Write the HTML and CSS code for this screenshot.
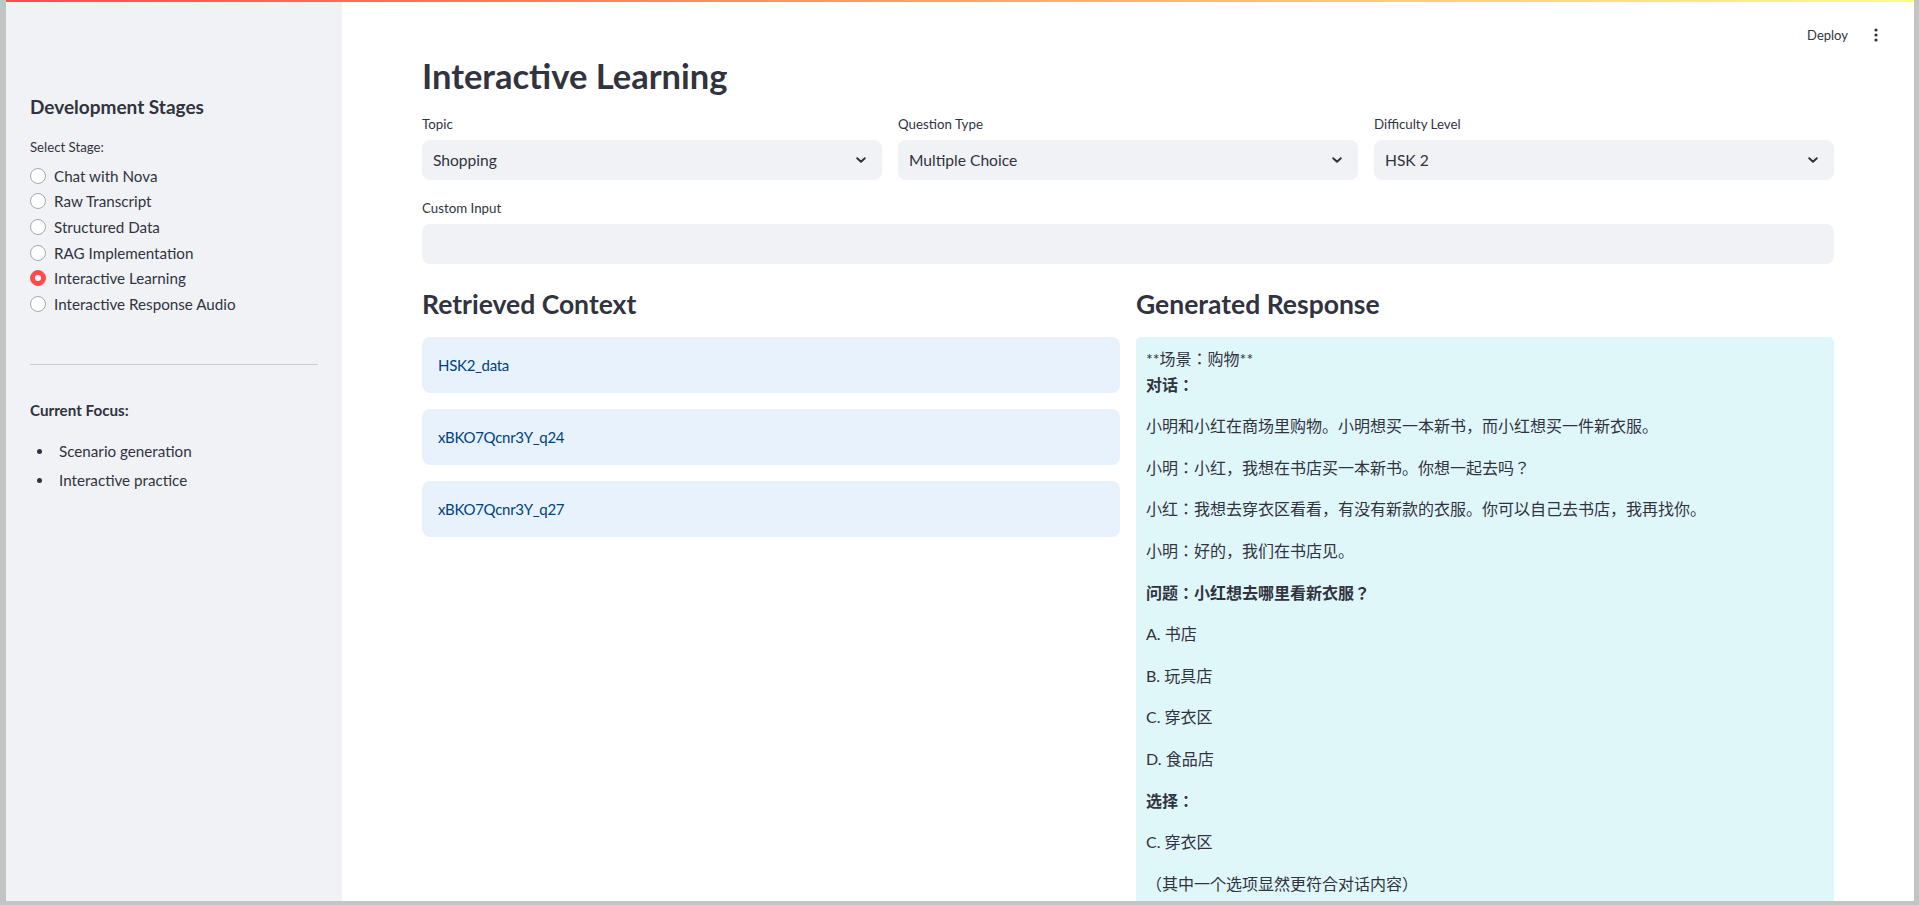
FILE: index.html
```html
<!DOCTYPE html>
<html lang="en">
<head>
<meta charset="utf-8">
<title>Interactive Learning</title>
<link rel="stylesheet" href="styles.css">
</head>
<body>
<div class="app">
  <div class="decoration"></div>
  <div class="layout">
    <aside class="sidebar">
      <h2 class="side-title">Development Stages</h2>
      <div class="side-label">Select Stage:</div>
      <div class="radio-group">
        <div class="radio"><span class="dot"></span><span>Chat with Nova</span></div>
        <div class="radio"><span class="dot"></span><span>Raw Transcript</span></div>
        <div class="radio"><span class="dot"></span><span>Structured Data</span></div>
        <div class="radio"><span class="dot"></span><span>RAG Implementation</span></div>
        <div class="radio"><span class="dot on"></span><span>Interactive Learning</span></div>
        <div class="radio"><span class="dot"></span><span>Interactive Response Audio</span></div>
      </div>
      <hr class="side-rule">
      <p class="focus-title">Current Focus:</p>
      <ul class="focus-list">
        <li>Scenario generation</li>
        <li>Interactive practice</li>
      </ul>
    </aside>
    <main class="main">
      <header class="topbar">
        <span class="deploy">Deploy</span>
        <svg class="kebab" width="16" height="16" viewBox="0 0 16 16" aria-hidden="true">
          <circle cx="8" cy="3" r="1.6" fill="#31333f"/>
          <circle cx="8" cy="8" r="1.6" fill="#31333f"/>
          <circle cx="8" cy="13" r="1.6" fill="#31333f"/>
        </svg>
      </header>
      <h1 class="page-title">Interactive Learning</h1>
      <div class="row3">
        <div class="field">
          <div class="field-label">Topic</div>
          <div class="select"><span>Shopping</span>
            <svg class="chev" width="12" height="12" viewBox="0 0 12 12" aria-hidden="true"><path d="M2.2 4.2 L6 7.8 L9.8 4.2" fill="none" stroke="#31333f" stroke-width="2" stroke-linecap="round" stroke-linejoin="round"/></svg>
          </div>
        </div>
        <div class="field">
          <div class="field-label">Question Type</div>
          <div class="select"><span>Multiple Choice</span>
            <svg class="chev" width="12" height="12" viewBox="0 0 12 12" aria-hidden="true"><path d="M2.2 4.2 L6 7.8 L9.8 4.2" fill="none" stroke="#31333f" stroke-width="2" stroke-linecap="round" stroke-linejoin="round"/></svg>
          </div>
        </div>
        <div class="field">
          <div class="field-label">Difficulty Level</div>
          <div class="select"><span>HSK 2</span>
            <svg class="chev" width="12" height="12" viewBox="0 0 12 12" aria-hidden="true"><path d="M2.2 4.2 L6 7.8 L9.8 4.2" fill="none" stroke="#31333f" stroke-width="2" stroke-linecap="round" stroke-linejoin="round"/></svg>
          </div>
        </div>
      </div>
      <div class="field custom">
        <div class="field-label">Custom Input</div>
        <div class="text-input"></div>
      </div>
      <div class="cols">
        <section class="col">
          <h3 class="sub">Retrieved Context</h3>
          <div class="info">HSK2_data</div>
          <div class="info">xBKO7Qcnr3Y_q24</div>
          <div class="info">xBKO7Qcnr3Y_q27</div>
        </section>
        <section class="col">
          <h3 class="sub">Generated Response</h3>
          <div class="response">
            <p>**场景：购物**<br><strong>对话：</strong></p>
            <p>小明和小红在商场里购物。小明想买一本新书，而小红想买一件新衣服。</p>
            <p>小明：小红，我想在书店买一本新书。你想一起去吗？</p>
            <p>小红：我想去穿衣区看看，有没有新款的衣服。你可以自己去书店，我再找你。</p>
            <p>小明：好的，我们在书店见。</p>
            <p><strong>问题：小红想去哪里看新衣服？</strong></p>
            <p>A. 书店</p>
            <p>B. 玩具店</p>
            <p>C. 穿衣区</p>
            <p>D. 食品店</p>
            <p><strong>选择：</strong></p>
            <p>C. 穿衣区</p>
            <p>（其中一个选项显然更符合对话内容）</p>
          </div>
        </section>
      </div>
    </main>
  </div>
</div>
</body>
</html>
```
FILE: styles.css
```css
* { box-sizing: border-box; }

html, body {
  margin: 0;
  padding: 0;
  height: 905px;
  overflow: hidden;
}

body {
  background: #c4c4c4;
  font-family: "Lato", "Noto Sans CJK JP", sans-serif;
  color: #31333f;
  font-size: 16px;
}

.app {
  position: relative;
  margin-left: 6px;
  width: 1908px;
  height: 901px;
  background: #ffffff;
  overflow: hidden;
}

.decoration {
  position: absolute;
  top: 0;
  left: 0;
  right: 0;
  height: 2px;
  background: linear-gradient(90deg, #ff4b4b, #fffd80);
  z-index: 5;
}

.layout {
  display: flex;
  height: 100%;
}

/* Sidebar */
.sidebar {
  width: 336px;
  flex: none;
  background: #f0f2f6;
  padding: 95px 24px 0 24px;
}

.side-title {
  margin: 0;
  font-size: 19px;
  line-height: 24px;
  font-weight: 700;
}

.side-label {
  margin-top: 18px;
  font-size: 13.2px;
  line-height: 21px;
}

.radio-group {
  margin-top: 5px;
  display: flex;
  flex-direction: column;
}

.radio {
  display: flex;
  align-items: center;
  gap: 8px;
  height: 25.6px;
  font-size: 15.2px;
}

.dot {
  width: 16px;
  height: 16px;
  border-radius: 50%;
  border: 1px solid #a4a8b3;
  background: #ffffff;
  display: flex;
  align-items: center;
  justify-content: center;
  flex: none;
}

.dot.on {
  background: #ff4b4b;
  border-color: #ff4b4b;
}

.dot.on::after {
  content: "";
  width: 6px;
  height: 6px;
  border-radius: 50%;
  background: #ffffff;
}

.side-rule {
  margin: 47px 0 0 0;
  border: none;
  border-top: 1px solid rgba(49, 51, 63, 0.2);
  height: 0;
}

.focus-title {
  margin: 33px 0 0 0;
  font-size: 15.2px;
  font-weight: 700;
  line-height: 25.6px;
}

.focus-list {
  margin: 16px 0 0 0;
  padding: 0;
  list-style: none;
  font-size: 15.2px;
}

.focus-list li {
  display: flex;
  align-items: center;
  line-height: 25.6px;
  margin: 0 0 3.2px 0;
}

.focus-list li::before {
  content: "";
  width: 5px;
  height: 5px;
  border-radius: 50%;
  background: #31333f;
  margin: 0 17px 0 7px;
  flex: none;
}

/* Main */
.main {
  flex: 1;
  padding: 0 80px;
  min-width: 0;
}

.topbar {
  height: 54px;
  margin-right: -80px;
  padding: 25px 30px 0 0;
  display: flex;
  justify-content: flex-end;
  align-items: flex-start;
  gap: 20px;
}

.deploy {
  font-size: 13px;
  line-height: 20px;
}

.kebab {
  margin-top: 2px;
}

.page-title {
  margin: 0;
  font-size: 34.5px;
  line-height: 43px;
  font-weight: 700;
}

.row3 {
  margin-top: 17px;
  display: grid;
  grid-template-columns: 1fr 1fr 1fr;
  gap: 16px;
}

.field-label {
  font-size: 13.3px;
  line-height: 21px;
  margin-bottom: 5px;
}

.select {
  height: 40px;
  background: #f0f2f6;
  border-radius: 8px;
  display: flex;
  align-items: center;
  justify-content: space-between;
  padding: 0 15px 0 11px;
  font-size: 15.6px;
}

.custom {
  margin-top: 18px;
}

.text-input {
  height: 40px;
  margin-top: 1px;
  background: #f0f2f6;
  border-radius: 8px;
}

.cols {
  margin-top: 23px;
  display: grid;
  grid-template-columns: 1fr 1fr;
  gap: 16px;
}

.col {
  display: flex;
  flex-direction: column;
  gap: 16px;
}

.sub {
  margin: 0;
  font-size: 26.5px;
  line-height: 34px;
  font-weight: 700;
}

.info {
  background: rgba(28, 131, 225, 0.1);
  color: #004280;
  border-radius: 8px;
  padding: 16px;
  line-height: 24px;
  font-size: 15px;
  letter-spacing: -0.3px;
}

.response {
  background: #e0f7fa;
  border-radius: 5px;
  padding: 9px 10px 10px 10px;
  font-size: 16px;
  line-height: 1.6;
}

.response p {
  margin: 0 0 16px 0;
}
```
